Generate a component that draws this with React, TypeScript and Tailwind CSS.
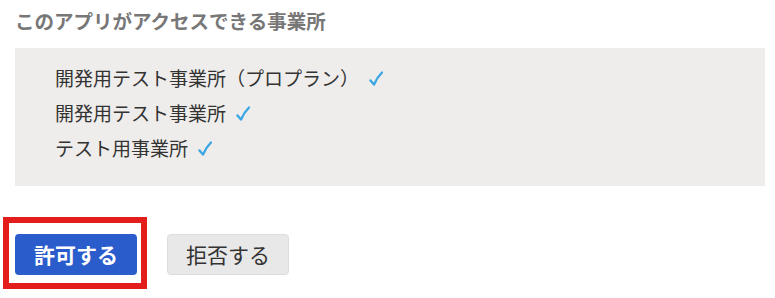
import React from "react";

const Check = () => (
  <svg width="14" height="16" viewBox="0 0 14 16" className="ml-[10px] shrink-0" aria-hidden>
    <path d="M1.5 9.5 L5 13.5 Q8 6.5 13 1.5" fill="none" stroke="#3aa6e3" strokeWidth="2.4" strokeLinecap="round" strokeLinejoin="round" />
  </svg>
);

export default function App() {
  const items = ["開発用テスト事業所（プロプラン）", "開発用テスト事業所", "テスト用事業所"];
  return (
    <div className="w-[775px] h-[298px] bg-white relative overflow-hidden" style={{ fontFamily: '"Noto Sans CJK JP", "Noto Sans", sans-serif' }}>
      <div className="pl-[15px] pr-[10px]">
        <h2 className="pt-[8px] h-[48px] text-[19.5px] leading-[26px] font-bold text-[#777777]">このアプリがアクセスできる事業所</h2>
        <div className="bg-[#efedeb] h-[138px] pl-[40px] pt-[13px]">
          {items.map((t) => (
            <div key={t} className="flex items-center h-[35px] text-[19px] text-[#333333]">
              <span>{t}</span>
              <Check />
            </div>
          ))}
        </div>
        <div className="flex items-center gap-[30px] mt-[48px]">
          <div className="relative">
            <button className="w-[122px] h-[41px] rounded-[4px] bg-[#2a5ccb] text-white font-bold text-[21px] leading-none">許可する</button>
            <div className="absolute left-[-12px] top-[-17px] w-[144px] h-[72px] border-[6px] border-[#e31c1c] pointer-events-none" />
          </div>
          <button className="w-[122px] h-[41px] rounded-[4px] bg-[#e8e8e8] border border-[#dcdcdc] text-[#333333] text-[21px] leading-none">拒否する</button>
        </div>
      </div>
    </div>
  );
}
